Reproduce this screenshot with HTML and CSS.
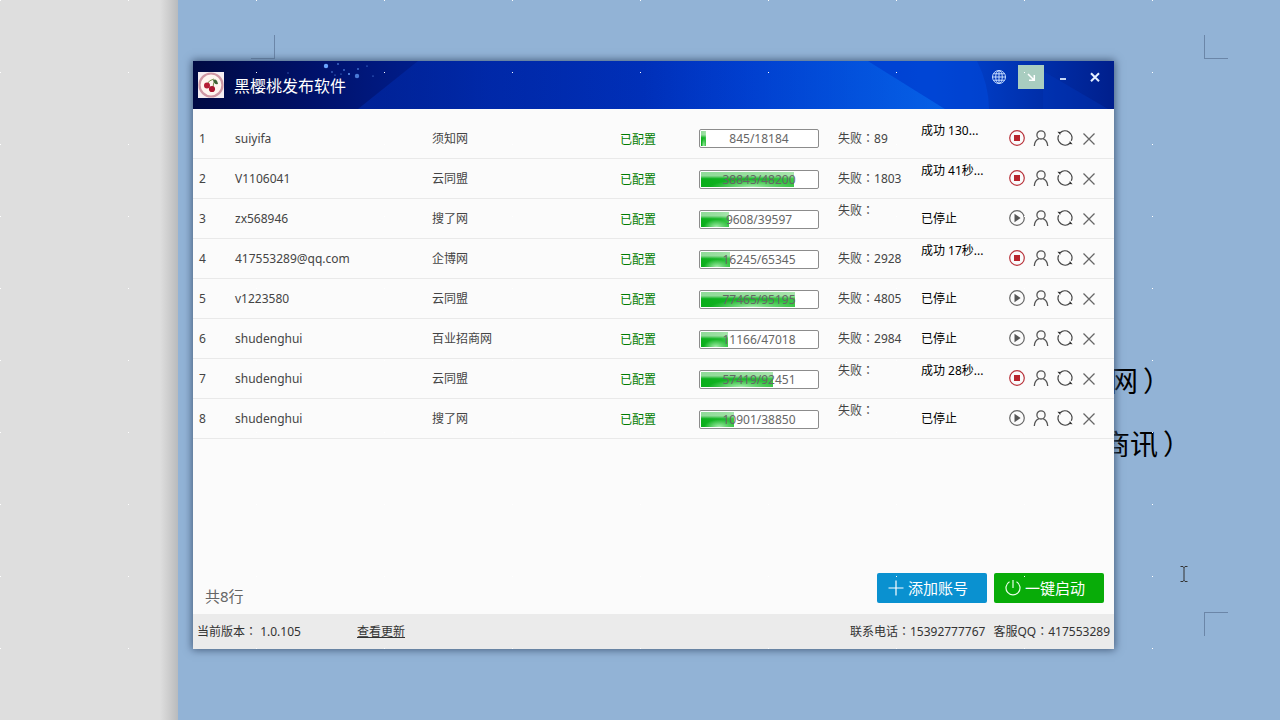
FILE: index.html
```html
<!DOCTYPE html>
<html lang="zh-CN">
<head>
<meta charset="utf-8">
<title>黑樱桃发布软件</title>
<link rel="stylesheet" href="styles.css">
</head>
<body>
<svg class="symbols" aria-hidden="true">
  <symbol id="stop" viewBox="0 0 16 16"><circle cx="8" cy="8" r="7.3" fill="none" stroke="#b8343c" stroke-width="1.2"/><rect x="5" y="5" width="6" height="6" fill="#b8242c"/></symbol>
  <symbol id="play" viewBox="0 0 16 16"><circle cx="8" cy="8" r="7.3" fill="none" stroke="#666" stroke-width="1.2"/><path d="M5.500 3.800v8.400L11.600 8z" fill="#555"/></symbol>
  <symbol id="user" viewBox="0 0 16 16"><g fill="none" stroke="#555" stroke-width="1.3"><circle cx="8" cy="4.900" r="4.100"/><path d="M1.300 16c.2-4 2-6.300 4.700-7.400M14.700 16c-.2-4-2-6.300-4.700-7.400"/></g></symbol>
  <symbol id="sync" viewBox="0 0 16 16"><g fill="none" stroke="#444" stroke-width="1.300"><path d="M3.200 2.700A7 7 0 0 1 14.300 10.800M12.800 13.300A7 7 0 0 1 1.700 5.200"/></g><path d="M.4 1.700l3.400.3-.6 3zM15.600 14.300l-3.400-.3.600-3z" fill="#333"/></symbol>
  <symbol id="remove" viewBox="0 0 16 16"><path d="M2.500 3.500l11 11m0-11l-11 11" fill="none" stroke="#666" stroke-width="1.300"/></symbol>
</svg>
<div class="desktop">
  <aside class="gutter"></aside>
  <main class="paper">
    <i class="crop crop-tl"></i><i class="crop crop-tr"></i><i class="crop crop-br"></i>
    <p class="doc-line line-a">网<span class="paren">）</span></p>
    <p class="doc-line line-b">商讯<span class="paren">）</span></p>
    <svg class="caret" viewBox="0 0 8 16"><path d="M.5.500h2.500l1 1 1-1h2.500M4 1v14M.5 15.500h2.500l1-1 1 1h2.500" fill="none" stroke="#333"/></svg>
  </main>

  <section class="window">
    <header class="titlebar">
      <svg class="sky" viewBox="0 0 921 48" preserveAspectRatio="none" aria-hidden="true">
        <defs>
          <linearGradient id="haze" x1="0" x2="1"><stop offset="0" stop-color="#0034c4" stop-opacity=".4"/><stop offset="1" stop-color="#0034c4" stop-opacity="0"/></linearGradient>
          <linearGradient id="beam" x1="0" x2="1"><stop offset="0" stop-color="#0050dc" stop-opacity="0"/><stop offset="1" stop-color="#0868ea"/></linearGradient>
          <linearGradient id="edge" x1="0" x2="1"><stop offset="0" stop-color="#003cc4"/><stop offset="1" stop-color="#001f8c"/></linearGradient>
        </defs>
        <path d="M165 48L225 0h235v48z" fill="url(#haze)"/>
        <path d="M450 0h225l77 48H450z" fill="url(#beam)" opacity=".75"/>
        <path d="M675 0h109q12 24 12 48h-44z" fill="#0044d2" opacity=".4"/>
        <path d="M784 0h137v48H796q0-24-12-48z" fill="url(#edge)"/>
        <path d="M850 10l65 38h-65z" fill="#0038bc" opacity=".4"/>
        <g fill="#6aa5ff"><circle cx="133" cy="5" r="2.200"/><circle cx="164" cy="15" r="2.200" opacity=".7"/><circle cx="145" cy="3" r=".8"/><circle cx="139" cy="11" r=".7"/><circle cx="151" cy="9" r=".8"/><circle cx="156" cy="13" r=".9"/><circle cx="165" cy="8" r=".8"/><circle cx="142" cy="14" r=".6"/><circle cx="174" cy="5" r=".6"/><circle cx="148" cy="13" r=".6"/><circle cx="180" cy="15" r=".6"/><circle cx="95" cy="12" r=".7" opacity=".6"/></g>
      </svg>
      <svg class="logo" viewBox="0 0 26 26" aria-hidden="true"><path fill="#f5eef2" d="M0 0h26v26H0z"/><circle cx="13" cy="13" r="11.500" fill="#fff6f0" stroke="#cf98a4" stroke-width="2.200"/><path d="M9 12q2-4 7-5M15 15q0-5 3-7" fill="none" stroke="#78904a"/><path d="M15 8q4-2 5 4-4 1-5-4" fill="#3d6535"/><circle cx="9" cy="13.500" r="3" fill="#b51f35"/><circle cx="14" cy="17" r="3.100" fill="#a91830"/></svg>
      <h1 class="title">黑樱桃发布软件</h1>
      <div class="controls">
        <button class="control" aria-label="网站"><svg width="16" height="16" viewBox="0 0 16 16"><g fill="none" stroke="#c5dcff"><circle cx="8" cy="8" r="6.500"/><ellipse cx="8" cy="8" rx="3.300" ry="6.500"/><path d="M8 1.500v13M1.500 8h13M2.500 4.800h11M2.500 11.200h11"/></g></svg></button>
        <button class="control mini" aria-label="缩小"><svg width="12" height="12" viewBox="0 0 12 12"><path d="M3 3l6 6M9.300 4v5.300H4" fill="none" stroke="#fff" stroke-width="1.500"/></svg></button>
        <button class="control" aria-label="最小化"><svg width="12" height="12" viewBox="0 0 12 12"><path d="M3 8h6" stroke="#dcebff" stroke-width="1.800"/></svg></button>
        <button class="control" aria-label="关闭"><svg width="12" height="12" viewBox="0 0 12 12"><path d="M2 2.200l8 8m0-8l-8 8" stroke="#e5f0ff" stroke-width="2"/></svg></button>
      </div>
    </header>

    <table class="accounts">
      <colgroup><col class="c-no"><col class="c-name"><col class="c-site"><col class="c-state"><col class="c-bar"><col class="c-fail"><col class="c-result"><col></colgroup>
      <tbody id="rows"></tbody>
    </table>

    <div class="actions">
      <span class="count">共8行</span>
      <button class="action add"><svg width="16" height="16" viewBox="0 0 16 16"><path d="M8 .5v15M.5 8h15" stroke="#fff" stroke-width="1.200"/></svg>添加账号</button>
      <button class="action start"><svg width="16" height="16" viewBox="0 0 16 16"><path d="M8 0v8M4.500 1.800a7 7 0 1 0 7 0" fill="none" stroke="#e8ffe8" stroke-width="1.200"/></svg>一键启动</button>
    </div>
    <footer class="statusbar">
      <span class="version">当前版本<span class="colon" lang="zh-TW">：</span> 1.0.105</span>
      <a class="update" href="#">查看更新</a>
      <span class="phone">联系电话<span class="colon" lang="zh-TW">：</span>15392777767</span>
      <span>客服QQ<span class="colon" lang="zh-TW">：</span>417553289</span>
    </footer>
  </section>
  <div class="specks"></div>
</div>
<script src="rows.js"></script>
</body>
</html>
```
FILE: rows.js
```js
const accounts = [
  ['suiyifa', '须知网', 845, 18184, '89', '成功 130...'],
  ['V1106041', '云同盟', 38843, 48200, '1803', '成功 41秒...'],
  ['zx568946', '搜了网', 9608, 39597, '', '已停止'],
  ['417553289@qq.com', '企博网', 16245, 65345, '2928', '成功 17秒...'],
  ['v1223580', '云同盟', 77465, 95195, '4805', '已停止'],
  ['shudenghui', '百业招商网', 11166, 47018, '2984', '已停止'],
  ['shudenghui', '云同盟', 57419, 92451, '', '成功 28秒...'],
  ['shudenghui', '搜了网', 10901, 38850, '', '已停止']
];

const icon = (id, label) =>
  `<button class="tool" aria-label="${label}"><svg width="16" height="16"><use href="#${id}"/></svg></button>`;

document.getElementById('rows').innerHTML = accounts.map(([name, site, done, total, fail, result], i) => {
  const running = result !== '已停止';
  return `<tr>
    <td class="no">${i + 1}</td><td>${name}</td><td>${site}</td><td class="state">已配置</td>
    <td><div class="bar" role="progressbar" aria-label="进度" aria-valuenow="${done}" aria-valuemax="${total}"><div class="fill" style="width:${(done / total * 100).toFixed(1)}%"></div><span class="amount">${done}/${total}</span></div></td>
    <td class="${fail ? '' : 'raised'}">失败<span class="colon" lang="zh-TW">：</span>${fail}</td>
    <td class="result ${running ? 'raised' : ''}">${result}</td>
    <td class="tool-cell"><div class="tools">${running ? icon('stop', '停止') : icon('play', '启动')}${icon('user', '账号')}${icon('sync', '刷新')}${icon('remove', '删除')}</div></td>
  </tr>`;
}).join('');
```
FILE: styles.css
```css
* { box-sizing: border-box; }
body { margin: 0; font: 12px/16px "Noto Sans", "Noto Sans CJK SC", sans-serif; color: #444; }
button { border: 0; padding: 0; background: none; font: inherit; color: inherit; }
svg { display: block; }
.symbols { position: absolute; width: 0; height: 0; }

.desktop { position: relative; display: flex; min-height: 100vh; overflow: hidden; }
.gutter { width: 178px; background: linear-gradient(90deg, #dedede 160px, #cfcfcf 168px, #b9bbbd 178px); }
.paper { position: relative; flex: 1; background: #92b3d6; }
.crop { position: absolute; width: 24px; height: 24px; border: 0 solid #6b86a8; }
.crop-tl { left: 73px; top: 35px; border-width: 0 1px 1px 0; }
.crop-tr { left: 1026px; top: 35px; border-width: 0 0 1px 1px; }
.crop-br { left: 1026px; top: 612px; border-width: 1px 0 0 1px; }
.doc-line { position: absolute; margin: 0; font-size: 28px; line-height: 36px; color: #000; }
.line-a { left: 932px; top: 363px; }
.line-b { left: 924px; top: 426px; }
.paren { margin-left: 5px; }
.caret { position: absolute; left: 1002px; top: 566px; width: 8px; height: 16px; }
.specks { position: absolute; inset: 0; pointer-events: none; background: radial-gradient(circle at 0 0, #fff 0 1px, transparent 1px) 0 0 / 128px 72px; }

.window { position: absolute; left: 193px; top: 61px; width: 921px; min-height: 588px; display: flex; flex-direction: column; background: #fbfbfb; box-shadow: 0 0 8px 1px #465d7c; }

.titlebar { position: relative; display: flex; height: 48px; padding: 0 6px 0 5px; background: linear-gradient(90deg, #000a43, #00116a 13%, #0025a0 32%, #0036c8 60%, #0047d8 80%, #0035b4); }
.sky { position: absolute; inset: 0; width: 100%; height: 100%; }
.logo { position: relative; width: 26px; height: 26px; margin-top: 11px; }
.title { position: relative; margin: 13px 0 0 10px; font-size: 16px; line-height: 24px; font-weight: 400; color: #fff; }
.controls { position: relative; display: flex; gap: 6px; margin: 4px 0 0 auto; }
.control { display: grid; place-items: center; width: 26px; height: 24px; }
.mini { background: #a9cdc0; }

.accounts { width: 100%; margin-top: 9px; border-collapse: collapse; table-layout: fixed; }
.c-no { width: 42px; }
.c-name { width: 197px; }
.c-site { width: 188px; }
.c-state { width: 79px; }
.c-bar { width: 139px; }
.c-fail { width: 83px; }
.c-result { width: 88px; }
.accounts td { height: 40px; padding: 2px 0 0; border-bottom: 1px solid #e9e9e9; white-space: nowrap; }
.accounts .no { padding-left: 6px; }
.accounts .state { padding-top: 4px; color: #007c00; }
.accounts .result { color: #000; }
.accounts .raised { padding-bottom: 16px; }
.accounts .tool-cell { padding-top: 0; }

.bar { position: relative; width: 120px; height: 19px; padding: 1px; border: 1px solid #8c8c8c; border-radius: 2px; background: #fff; }
.fill { height: 100%; background: linear-gradient(#ffffff8c 0 25%, #ffffff00 45%), radial-gradient(ellipse 45% 50% at 55% 100%, #a5edab, #a5edab00), linear-gradient(90deg, #0aae1b, #20b82f 70%, #3cc748); }
.amount { position: absolute; inset: 0; text-align: center; line-height: 18px; color: #666; }
.tools { display: flex; gap: 8px; }
.tool { width: 16px; height: 16px; }

.actions { display: flex; align-items: flex-start; gap: 7px; margin-top: auto; padding: 0 10px 6px 12px; }
.count { margin: 11px auto 0 0; font-size: 15px; line-height: 24px; color: #666; }
.action { display: flex; align-items: center; gap: 4px; width: 110px; height: 30px; padding-left: 11px; border-radius: 2px; font-size: 15px; color: #fff; }
.add { background: #0a91d0; }
.start { background: #08ac08; }
.statusbar { display: flex; align-items: center; gap: 8px; height: 35px; padding: 0 4px; background: #ebebeb; color: #333; }
.version { width: 152px; }
.update { color: inherit; }
.phone { margin-left: auto; }
```
